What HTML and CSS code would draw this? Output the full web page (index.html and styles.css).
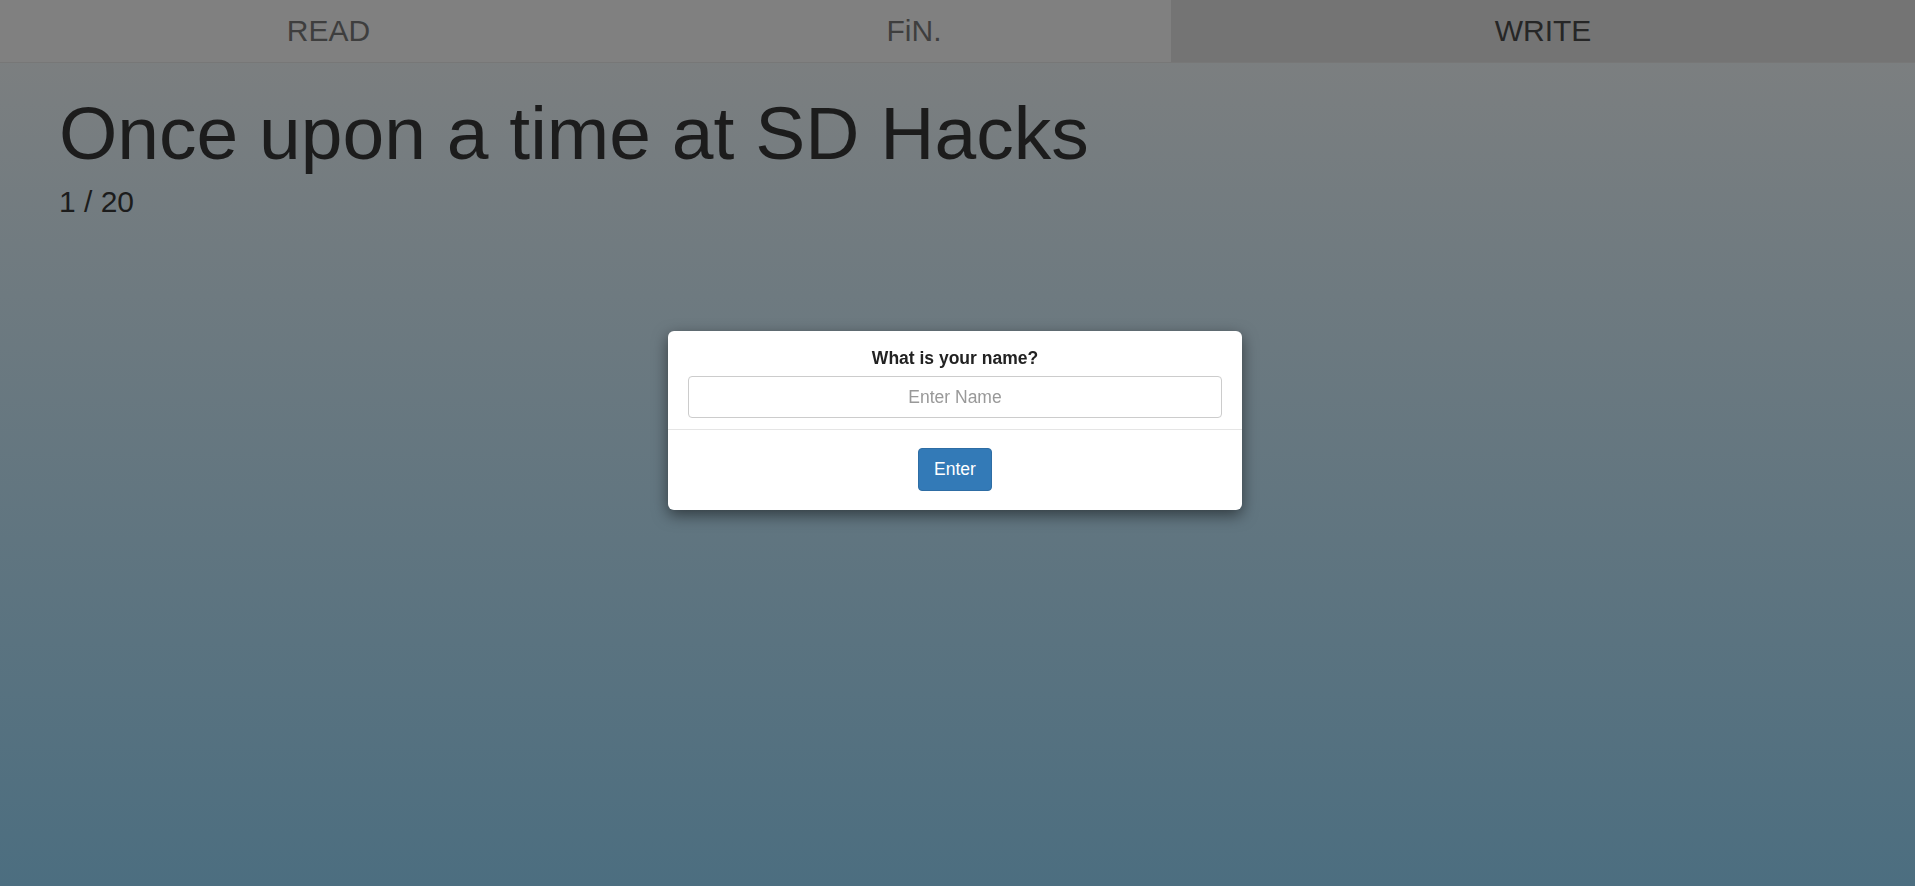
FILE: index.html
```html
<!DOCTYPE html>
<html>
	<head>
		<meta charset="UTF-8">
		<title>FiN.</title>
		<link rel="stylesheet" href="styles.css">
	</head>
	<body>
		<nav class="tabs">
			<a class="tab" href="#">READ</a>
			<a class="tab" href="#">FiN.</a>
			<a class="tab active" href="#">WRITE</a>
		</nav>
		<div class="story">
			<h1>Once upon a time at SD Hacks</h1>
			<div class="count">1 / 20</div>
		</div>
		<div class="modalLayer">
			<div class="modalBox">
				<div class="modalBody">
					<label for="name">What is your name?</label>
					<input type="text" id="name" placeholder="Enter Name" />
				</div>
				<div class="modalFooter">
					<button type="button" class="btnEnter">Enter</button>
				</div>
			</div>
		</div>
	</body>
</html>
```

FILE: styles.css
```css
*,
*::before,
*::after{
	box-sizing: border-box;
}
html,
body{
	margin: 0;
	height: 100%;
}
body{
	font-family: "Liberation Sans", Arial, sans-serif;
	font-size: 14px;
	color: #1c1c1c;
	background: linear-gradient(#7f8080, #4c6e80);
	overflow: hidden;
}
.tabs{
	display: grid;
	grid-template-columns: 657fr 514fr 744fr;
	height: 63px;
	background: #808080;
	border-bottom: 1px solid #777;
}
.tabs .tab{
	display: block;
	height: 62px;
	line-height: 62px;
	text-align: center;
	font-size: 30px;
	color: #3e3e3e;
	text-decoration: none;
}
.tabs .tab.active{
	background: #747474;
	color: #262626;
}
.story{
	padding: 29px 0 0 59px;
}
.story h1{
	margin: 0;
	font-size: 75px;
	font-weight: normal;
	line-height: 1.1;
}
.story .count{
	margin-top: 10px;
	font-size: 30px;
}
.modalLayer{
	position: fixed;
	left: 0;
	right: 0;
	top: 0;
	bottom: 0;
	padding-right: 5px;
}
.modalBox{
	width: 574px;
	margin: 331px auto 0;
	background: #fff;
	border-radius: 6px;
	box-shadow: 0 5px 15px rgba(0,0,0,.5);
}
.modalBody{
	padding: 15px 20px 11px;
	text-align: center;
}
.modalBody label{
	display: block;
	margin-bottom: 5px;
	font-size: 17.5px;
	font-weight: bold;
	line-height: 25px;
	color: #222;
}
.modalBody input{
	display: block;
	width: 100%;
	height: 42px;
	border: 1px solid #ccc;
	border-radius: 4px;
	outline: none;
	font-family: inherit;
	font-size: 17.5px;
	text-align: center;
	color: #555;
}
.modalBody input::placeholder{
	color: #999;
}
.modalFooter{
	padding: 18px 20px 19px;
	border-top: 1px solid #e5e5e5;
	text-align: center;
}
.btnEnter{
	height: 43px;
	padding: 0 15px;
	border: 1px solid #2e6da4;
	border-radius: 4px;
	background: #337ab7;
	color: #fff;
	font-family: inherit;
	font-size: 17.5px;
	cursor: pointer;
}
```
